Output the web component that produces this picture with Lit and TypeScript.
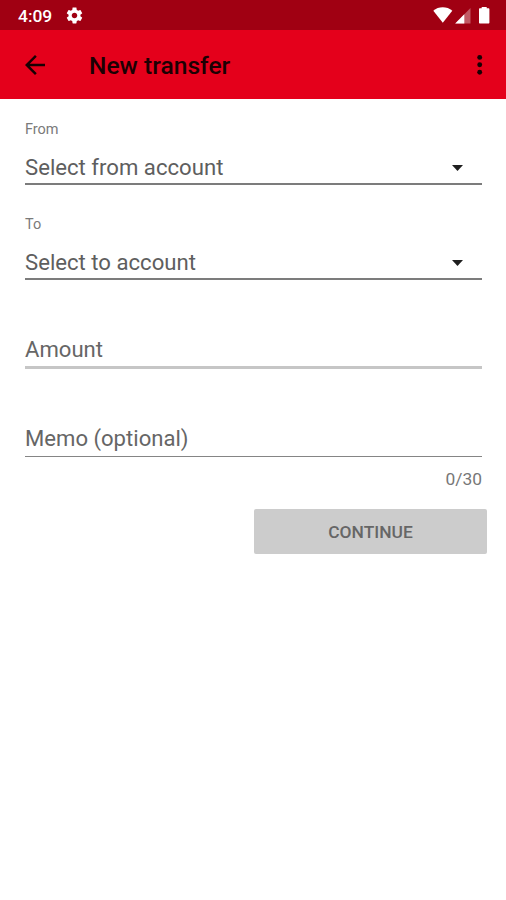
import { LitElement, html, css } from "lit";
import { customElement, property } from "lit/decorators.js";

@customElement("status-bar")
class StatusBar extends LitElement {
  static styles = css`
    :host {
      display: flex;
      align-items: center;
      height: 30px;
      padding: 0 14px 0 18px;
      background: #a00012;
      color: #fff;
      box-sizing: border-box;
    }
    .time { font-size: 17.4px; font-weight: 500; line-height: 20px; padding-top: 2px; }
    .gear { margin-left: 12.500px; padding-top: 1px; }
    .spacer { flex: 1; }
    svg { display: block; }
  `;
  render() {
    return html`
      <span class="time">4:09</span>
      <svg class="gear" width="19" height="19" viewBox="0 0 24 24">
        <path fill="#fff" d="M19.43 12.98c.04-.32.07-.64.07-.98s-.03-.66-.07-.98l2.11-1.65c.19-.15.24-.42.12-.64l-2-3.46c-.12-.22-.39-.3-.61-.22l-2.49 1c-.52-.4-1.08-.73-1.69-.98l-.38-2.65C14.46 2.18 14.25 2 14 2h-4c-.25 0-.46.18-.49.42l-.38 2.65c-.61.25-1.17.59-1.69.98l-2.49-1c-.23-.09-.49 0-.61.22l-2 3.46c-.13.22-.07.49.12.64l2.11 1.65c-.04.32-.07.65-.07.98s.03.66.07.98l-2.11 1.65c-.19.15-.24.42-.12.64l2 3.46c.12.22.39.3.61.22l2.49-1c.52.4 1.08.73 1.69.98l.38 2.65c.03.24.24.42.49.42h4c.25 0 .46-.18.49-.42l.38-2.65c.61-.25 1.17-.59 1.69-.98l2.49 1c.23.09.49 0 .61-.22l2-3.46c.12-.22.07-.49-.12-.64l-2.11-1.65zM12 15.5c-1.93 0-3.5-1.57-3.5-3.5s1.57-3.5 3.5-3.5 3.5 1.57 3.5 3.5-1.57 3.5-3.5 3.5z"/>
      </svg>
      <span class="spacer"></span>
      <svg width="60" height="30" viewBox="0 0 60 30">
        <path fill="#fff" d="M1.300 10.800C6.500 6.200 15 6.200 20.300 10.800L10.800 22.800z"/>
        <path fill="#fff" fill-opacity=".35" d="M38.500 8V23.400H23.200z"/>
        <path fill="#fff" d="M32.300 14.200V23.400H23.200z"/>
        <path fill="#fff" d="M49.700 7V8.300H48C47.400 8.300 47 8.700 47 9.300V22.600C47 23.200 47.400 23.600 48 23.600H56.400C57 23.600 57.400 23.200 57.400 22.600V9.300C57.400 8.700 57 8.300 56.400 8.300H54.700V7z"/>
      </svg>
    `;
  }
}

@customElement("title-bar")
class TitleBar extends LitElement {
  @property() heading = "";
  static styles = css`
    :host {
      display: flex;
      align-items: center;
      height: 69px;
      padding: 0 11px 0 20px;
      background: #e4001b;
      box-sizing: border-box;
    }
    .title {
      flex: 1;
      margin: 0 0 0 39px;
      padding-top: 3px;
      font-size: 24.6px;
      line-height: 30px;
      font-weight: 500;
      color: #1c0003;
    }
    svg { display: block; }
  `;
  render() {
    return html`
      <svg width="30" height="30" viewBox="0 0 24 24">
        <path fill="#180003" d="M20 11H7.830l5.590-5.590L12 4l-8 8 8 8 1.410-1.410L7.830 13H20v-2z"/>
      </svg>
      <h1 class="title">${this.heading}</h1>
      <svg width="30" height="30" viewBox="0 0 30 30">
        <circle cx="14.700" cy="7.400" r="2.450" fill="#180003"/>
        <circle cx="14.700" cy="14.800" r="2.450" fill="#180003"/>
        <circle cx="14.700" cy="22.200" r="2.450" fill="#180003"/>
      </svg>
    `;
  }
}

@customElement("select-field")
class SelectField extends LitElement {
  @property() label = "";
  @property() value = "";
  static styles = css`
    :host { display: block; }
    .label { font-size: 14.5px; line-height: 18px; color: #7a7a7a; }
    .row {
      display: flex;
      align-items: center;
      justify-content: space-between;
      height: 44px;
      padding: 0 19px 0 0;
      border-bottom: 2px solid #7c7c7c;
    }
    .value { font-size: 22.15px; line-height: 28px; padding-top: 12px; color: #5e5e5e; }
    svg { display: block; margin-top: 13px; }
  `;
  render() {
    return html`
      <div class="label">${this.label}</div>
      <div class="row">
        <span class="value">${this.value}</span>
        <svg width="11" height="6" viewBox="0 0 11 6"><path d="M0 0h11L5.500 6z" fill="#1f1f1f"/></svg>
      </div>
    `;
  }
}

@customElement("app-root")
class AppRoot extends LitElement {
  static styles = css`
    :host {
      display: block;
      height: 900px;
      overflow: hidden;
      background: #fff;
      font-family: Roboto, "Liberation Sans", sans-serif;
    }
    .form { padding: 22px 24px 0 25px; }
    .second { margin-top: 31px; }
    .input {
      display: flex;
      align-items: flex-end;
      box-sizing: border-box;
      font-size: 22.1px;
      line-height: 28px;
      color: #666;
    }
    .amount { height: 89px; padding-bottom: 3px; border-bottom: 3px solid #c6c6c6; }
    .memo { height: 88px; padding-bottom: 4px; border-bottom: 1px solid #858585; }
    .count { margin-top: 12px; font-size: 17.4px; line-height: 20px; color: #777; text-align: right; }
    .actions { display: flex; justify-content: flex-end; padding: 20px 19px 0 0; }
    .continue {
      width: 233px;
      height: 45px;
      padding: 1px 0 0;
      border: 0;
      border-radius: 2px;
      background: #ccc;
      color: #666;
      font: 500 17.4px/20px Roboto, "Liberation Sans", sans-serif;
    }
  `;
  render() {
    return html`
      <status-bar></status-bar>
      <title-bar heading="New transfer"></title-bar>
      <div class="form">
        <select-field label="From" value="Select from account"></select-field>
        <select-field class="second" label="To" value="Select to account"></select-field>
        <div class="input amount">Amount</div>
        <div class="input memo">Memo (optional)</div>
        <div class="count">0/30</div>
      </div>
      <div class="actions"><button class="continue">CONTINUE</button></div>
    `;
  }
}
